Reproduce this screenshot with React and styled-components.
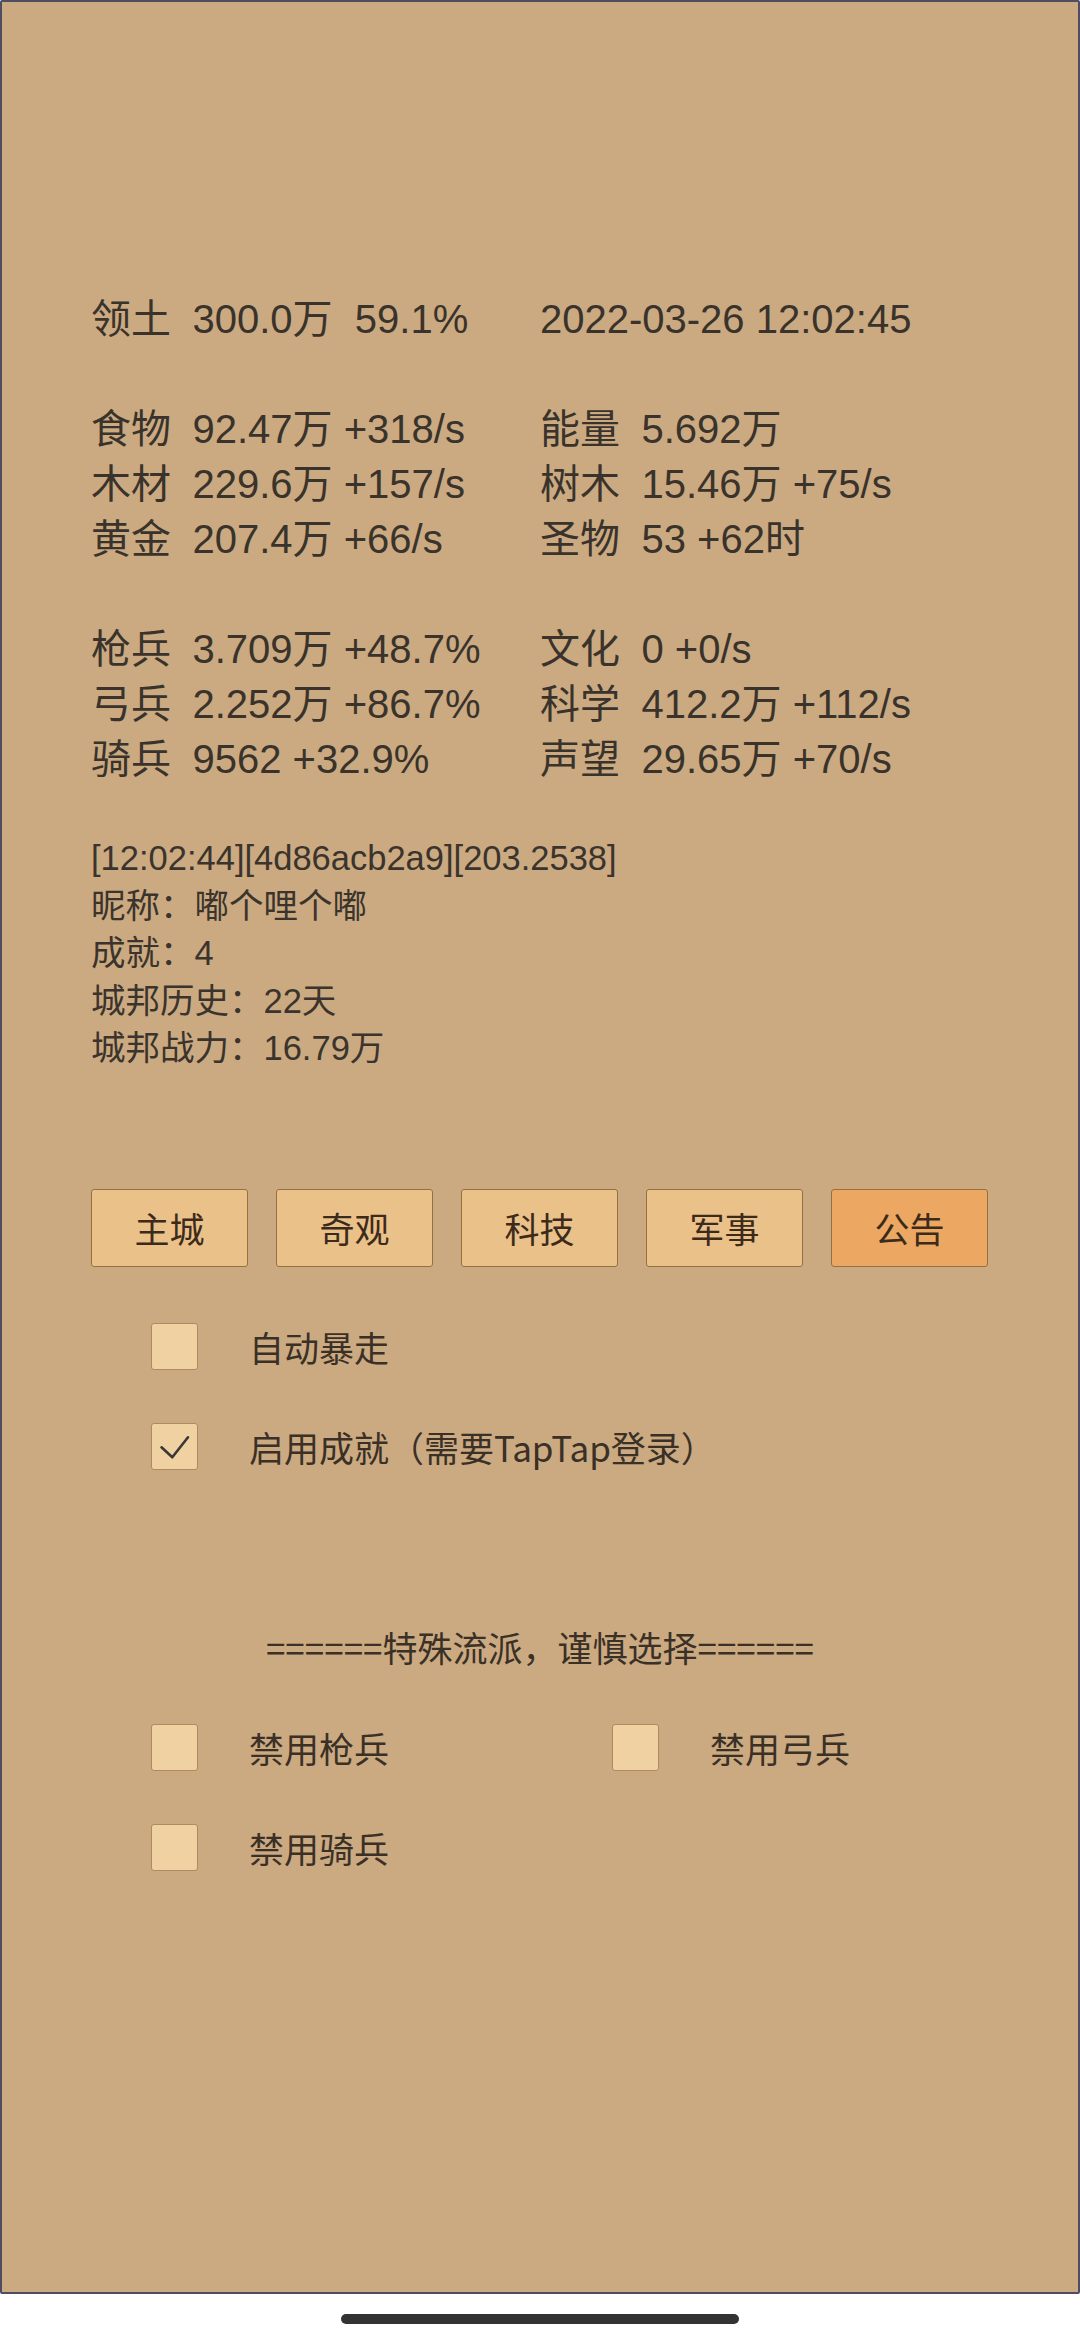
import React from "react";
import styled, { createGlobalStyle } from "styled-components";

const GlobalStyle = createGlobalStyle`
  html, body {
    margin: 0;
    padding: 0;
    background: #ffffff;
  }
  * { box-sizing: border-box; }
`;

const Screen = styled.div`
  width: 1080px;
  height: 2340px;
  display: flex;
  flex-direction: column;
  background: #ffffff;
`;

const Panel = styled.main`
  height: 2294px;
  border: 2px solid #4e4d63;
  border-radius: 2px;
  background: #cbaa82;
  padding: 290px 89px 0;
  display: flex;
  flex-direction: column;
`;

const StatGrid = styled.section`
  display: grid;
  grid-template-columns: 101.5px 347.5px 101.5px 1fr;
  font-family: "Liberation Sans", "Noto Sans CJK SC", sans-serif;
  font-size: 40px;
  line-height: 55px;
  color: #39332b;
`;

const Label = styled.span`
  white-space: nowrap;
`;

const Value = styled.span`
  white-space: pre;
  grid-column: ${(p) => p.$span || "auto"};
`;

const Spacer = styled.div`
  grid-column: 1 / -1;
  height: 55px;
`;

const Info = styled.section`
  margin-top: 48px;
  font-family: "Liberation Sans", "Noto Sans CJK SC", sans-serif;
  font-size: 34.5px;
  line-height: 47.5px;
  color: #3a342c;
`;

const InfoLine = styled.div`
  white-space: pre;
`;

const TabBar = styled.nav`
  margin-top: 116px;
  display: flex;
  gap: 28px;
`;

const Tab = styled.button`
  width: 157px;
  height: 78px;
  padding: 0;
  border: 1px solid #97703f;
  border-radius: 3px;
  background: ${(p) => (p.$active ? "#eca862" : "#ebc18a")};
  font-family: "Noto Sans CJK SC", sans-serif;
  font-size: 35px;
  color: #3c2b1b;
  display: flex;
  align-items: center;
  justify-content: center;
`;

const Options = styled.section`
  margin-top: 56px;
  padding-left: 60px;
  display: flex;
  flex-direction: column;
  gap: 53px;
`;

const OptionRow = styled.label`
  height: 47px;
  display: flex;
  align-items: center;
  gap: 51px;
  font-family: "Noto Sans CJK SC", sans-serif;
  font-size: 35px;
  color: #3a3026;
  white-space: nowrap;
`;

const Box = styled.span`
  position: relative;
  width: 47px;
  height: 47px;
  flex: none;
  border: 1px solid #ad8a5f;
  border-radius: 3px;
  background: #f0d1a2;
`;

const CheckMark = styled.svg`
  position: absolute;
  left: -1px;
  top: -1px;
`;

const Title = styled.h2`
  margin: 153px 0 0;
  text-align: center;
  font-family: "Noto Sans CJK SC", sans-serif;
  font-weight: 400;
  font-size: 35px;
  line-height: 47px;
  color: #3a3026;
  white-space: nowrap;
`;

const SpecialGrid = styled.section`
  margin-top: 54px;
  padding-left: 60px;
  display: grid;
  grid-template-columns: 461px 1fr;
  row-gap: 53px;
`;

const HomeArea = styled.div`
  flex: 1;
  display: flex;
  justify-content: center;
  padding-top: 20px;
`;

const HomeIndicator = styled.div`
  width: 398px;
  height: 10px;
  border-radius: 5px;
  background: #333333;
`;

const CheckBox = ({ checked }) => (
  <Box>
    {checked && (
      <CheckMark width="47" height="47" viewBox="0 0 47 47">
        <path
          d="M10.5 24.3 L21.3 34.3 L37 14.3"
          fill="none"
          stroke="#3a3835"
          strokeWidth="2.6"
          strokeLinecap="round"
          strokeLinejoin="round"
        />
      </CheckMark>
    )}
  </Box>
);

const Option = ({ checked, children }) => (
  <OptionRow>
    <CheckBox checked={checked} />
    <span>{children}</span>
  </OptionRow>
);

const statRows = [
  [["领土", "300.0万  59.1%"], ["", "2022-03-26 12:02:45"]],
  null,
  [["食物", "92.47万 +318/s"], ["能量", "5.692万"]],
  [["木材", "229.6万 +157/s"], ["树木", "15.46万 +75/s"]],
  [["黄金", "207.4万 +66/s"], ["圣物", "53 +62时"]],
  null,
  [["枪兵", "3.709万 +48.7%"], ["文化", "0 +0/s"]],
  [["弓兵", "2.252万 +86.7%"], ["科学", "412.2万 +112/s"]],
  [["骑兵", "9562 +32.9%"], ["声望", "29.65万 +70/s"]],
];

const infoLines = [
  "[12:02:44][4d86acb2a9][203.2538]",
  "昵称：嘟个哩个嘟",
  "成就：4",
  "城邦历史：22天",
  "城邦战力：16.79万",
];

const tabs = ["主城", "奇观", "科技", "军事", "公告"];

export default function App() {
  return (
    <>
      <GlobalStyle />
      <Screen>
        <Panel>
          <StatGrid>
            {statRows.map((row, i) =>
              row === null ? (
                <Spacer key={i} />
              ) : (
                <React.Fragment key={i}>
                  <Label>{row[0][0]}</Label>
                  <Value>{row[0][1]}</Value>
                  {row[1][0] ? (
                    <>
                      <Label>{row[1][0]}</Label>
                      <Value>{row[1][1]}</Value>
                    </>
                  ) : (
                    <Value $span="3 / 5">{row[1][1]}</Value>
                  )}
                </React.Fragment>
              )
            )}
          </StatGrid>

          <Info>
            {infoLines.map((l) => (
              <InfoLine key={l}>{l}</InfoLine>
            ))}
          </Info>

          <TabBar>
            {tabs.map((t) => (
              <Tab key={t} $active={t === "公告"}>
                {t}
              </Tab>
            ))}
          </TabBar>

          <Options>
            <Option>自动暴走</Option>
            <Option checked>启用成就（需要TapTap登录）</Option>
          </Options>

          <Title>======特殊流派，谨慎选择======</Title>

          <SpecialGrid>
            <Option>禁用枪兵</Option>
            <Option>禁用弓兵</Option>
            <Option>禁用骑兵</Option>
          </SpecialGrid>
        </Panel>
        <HomeArea>
          <HomeIndicator />
        </HomeArea>
      </Screen>
    </>
  );
}
